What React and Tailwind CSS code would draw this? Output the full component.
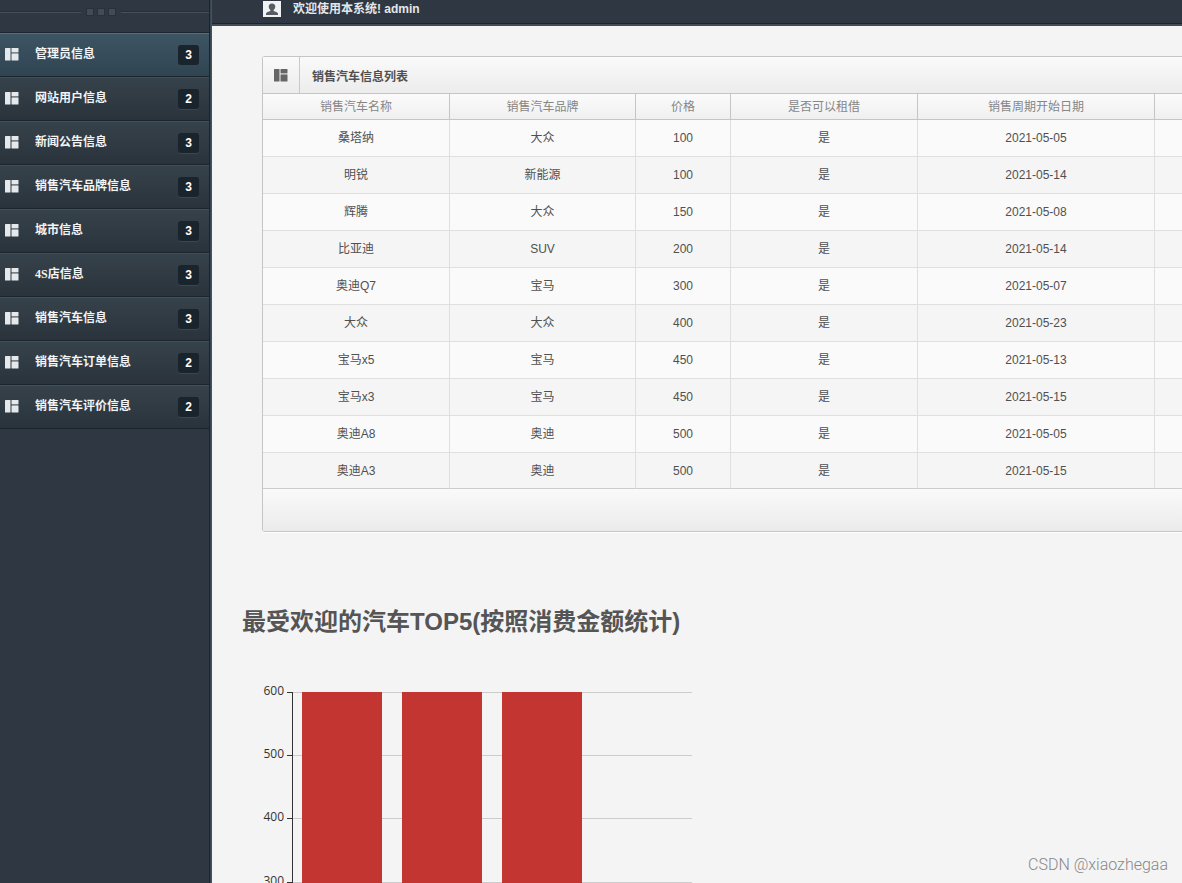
import React from "react";

const menu = [
  ["管理员信息", 3],
  ["网站用户信息", 2],
  ["新闻公告信息", 3],
  ["销售汽车品牌信息", 3],
  ["城市信息", 3],
  ["4S店信息", 3],
  ["销售汽车信息", 3],
  ["销售汽车订单信息", 2],
  ["销售汽车评价信息", 2],
];

const columns = ["销售汽车名称", "销售汽车品牌", "价格", "是否可以租借", "销售周期开始日期", ""];

const cars = [
  ["桑塔纳", "大众", "100", "是", "2021-05-05"],
  ["明锐", "新能源", "100", "是", "2021-05-14"],
  ["辉腾", "大众", "150", "是", "2021-05-08"],
  ["比亚迪", "SUV", "200", "是", "2021-05-14"],
  ["奥迪Q7", "宝马", "300", "是", "2021-05-07"],
  ["大众", "大众", "400", "是", "2021-05-23"],
  ["宝马x5", "宝马", "450", "是", "2021-05-13"],
  ["宝马x3", "宝马", "450", "是", "2021-05-15"],
  ["奥迪A8", "奥迪", "500", "是", "2021-05-05"],
  ["奥迪A3", "奥迪", "500", "是", "2021-05-15"],
];

function GridIcon({ className }) {
  return (
    <svg viewBox="0 0 14 13" className={className} fill="currentColor" aria-hidden="true">
      <rect x="0" y="0" width="5.5" height="12.5" rx="0.5" />
      <rect x="6.5" y="0" width="7" height="4" rx="0.5" />
      <rect x="6.5" y="4" width="7" height="1.4" opacity="0.4" />
      <rect x="6.5" y="5.4" width="7" height="7.1" rx="0.5" />
    </svg>
  );
}

function UserIcon() {
  return (
    <svg viewBox="0 0 18 16" className="h-4 w-[18px]" aria-hidden="true">
      <rect width="18" height="16" fill="#f1f2f3" />
      <path
        fill="#565c62"
        d="M9 2.400c-2.300 0-3.300 1.300-3.300 3.200 0 1.500.7 2.700 1.700 3.400v1c-1.800.7-4.100 1.100-4.400 2.600V14h12v-1.400c-.3-1.500-2.600-1.900-4.400-2.600V9c1-.7 1.700-1.900 1.700-3.400 0-1.900-1-3.200-3.300-3.200z"
      />
    </svg>
  );
}

function Sidebar() {
  return (
    <aside className="w-[209px] shrink-0">
      <div className="flex h-8 items-start gap-[5px] pt-2">
        <div className="mt-[3px] h-[2px] flex-1 border-t border-b border-t-[#27303a] border-b-[#465059]" />
        <div className="flex gap-[3px]">
          {[0, 1, 2].map((i) => (
            <span key={i} className="size-2 border border-[#27313a] bg-[#434c56]" />
          ))}
        </div>
        <div className="mt-[3px] h-[2px] flex-[0_0_88px] border-t border-b border-t-[#27303a] border-b-[#465059]" />
      </div>
      <nav className="border-t border-[#1d262e]">
        <ul>
          {menu.map(([label, count], i) => (
            <li key={label}>
              <a
                href="#"
                className={
                  "flex h-11 items-center border-t border-b border-b-[#1b252d] pr-[10px] pl-[5px] " +
                  (i === 0
                    ? "border-t-[#507080] bg-linear-to-b from-[#3d5463] to-[#304552]"
                    : "border-t-[#434f59] bg-linear-to-b from-[#36424b] to-[#2a333b]")
                }
              >
                <GridIcon className="mb-0.5 h-[13px] w-[14px] text-[#e6e9eb]" />
                <span className="ml-4 flex-1 pb-0.5 font-['Liberation_Serif','Noto_Sans_CJK_SC',serif] text-xs leading-4 font-bold text-[#f2f4f5]">
                  {label}
                </span>
                <span className="h-5 w-[21px] rounded-[3px] bg-[#1a242c] text-center text-xs leading-5 font-bold text-white shadow-[0_1px_0_#3b464f]">
                  {count}
                </span>
              </a>
            </li>
          ))}
        </ul>
      </nav>
    </aside>
  );
}

function CarTable() {
  return (
    <section className="rounded-l-[3px] border border-r-0 border-[#c5c5c5] bg-[#f9f9f9] shadow-[0_1px_0_#ffffff]">
      <div className="flex h-[37px] items-stretch border-b border-[#c5c5c5] bg-linear-to-b from-[#fafafa] to-[#ececec]">
        <div className="flex w-[37px] items-center justify-center border-r border-[#c9c9c9]">
          <GridIcon className="h-[13px] w-[14px] text-[#666666]" />
        </div>
        <h1 className="pt-0.5 pl-3 text-xs leading-9 font-bold text-[#505050]">销售汽车信息列表</h1>
      </div>
      <table className="w-full table-fixed border-separate border-spacing-0 text-center text-xs text-[#505050]">
        <colgroup>
          <col className="w-[187px]" />
          <col className="w-[186px]" />
          <col className="w-[95px]" />
          <col className="w-[187px]" />
          <col className="w-[237px]" />
          <col />
        </colgroup>
        <thead>
          <tr className="h-[26px] bg-linear-to-b from-[#fbfbfb] to-[#efefef]">
            {columns.map((c, i) => (
              <th
                key={i}
                scope="col"
                className="border-r border-b border-[#c5c5c5] p-0 font-normal text-[#868686] last:border-r-0"
              >
                {c}
              </th>
            ))}
          </tr>
        </thead>
        <tbody>
          {cars.map((row, i) => (
            <tr key={i} className="h-[37px] bg-[#fafafa] last:h-9 even:bg-[#f5f5f5]">
              {[...row, ""].map((cell, j) => (
                <td
                  key={j}
                  className={
                    "border-r border-b border-r-[#dfdfdf] p-0 last:border-r-0 " +
                    (i === cars.length - 1 ? "border-b-[#cccccc]" : "border-b-[#dfdfdf]")
                  }
                >
                  {cell}
                </td>
              ))}
            </tr>
          ))}
        </tbody>
      </table>
      <div className="h-[42px] bg-linear-to-b from-[#fafafa] to-[#ebebeb]" />
    </section>
  );
}

const ticks = [
  [600, 12],
  [500, 75],
  [400, 138],
  [300, 202],
];

function TopChart() {
  return (
    <svg width="460" height="210" viewBox="0 0 460 210" role="img" className="block">
      <g shapeRendering="crispEdges">
        {ticks.map(([v, y]) => (
          <rect key={v} x="50" y={y} width="400" height="1" fill="#cccccc" />
        ))}
        {[60, 160, 260].map((x) => (
          <rect key={x} x={x} y="12" width="80" height="198" fill="#c23531" />
        ))}
        <rect x="50" y="12" width="1" height="198" fill="#333333" />
        {ticks.map(([v, y]) => (
          <rect key={v} x="45" y={y} width="5" height="1" fill="#333333" />
        ))}
      </g>
      {ticks.map(([v, y]) => (
        <text
          key={v}
          x="42"
          y={y + 3}
          textAnchor="end"
          className="fill-[#333333] font-['Open_Sans','Noto_Sans_CJK_SC',sans-serif] text-xs"
        >
          {v}
        </text>
      ))}
    </svg>
  );
}

export default function App() {
  return (
    <div className="flex h-screen overflow-hidden bg-[#2f3842] font-['Liberation_Sans','Noto_Sans_CJK_SC',sans-serif]">
      <Sidebar />
      <div className="w-[3px] shrink-0 border-x border-l-[#1c252d] border-r-[#46525c] bg-[#36454f]" />
      <div className="flex min-w-0 flex-1 flex-col">
        <header className="flex h-[26px] shrink-0 items-start gap-3 border-b-2 border-[#414c55] pt-px pl-[51px] shadow-[inset_0_-1px_0_#1c252d]">
          <UserIcon />
          <span className="text-xs leading-4 font-bold text-[#e4e7e9]">欢迎使用本系统! admin</span>
        </header>
        <main className="relative min-h-0 flex-1 overflow-hidden bg-[#f4f4f4]">
          <div className="pt-[30px] pl-[50px]">
            <CarTable />
          </div>
          <h2 className="mt-[72px] pl-[30px] text-2xl leading-9 font-bold text-[#555555]">
            最受欢迎的汽车TOP5(按照消费金额统计)
          </h2>
          <div className="mt-10 pl-[30px]">
            <TopChart />
          </div>
          <p className="absolute right-[14px] bottom-2 font-[Roboto,sans-serif] text-base leading-5 font-light text-[#888888]">
            CSDN @xiaozhegaa
          </p>
        </main>
      </div>
    </div>
  );
}
